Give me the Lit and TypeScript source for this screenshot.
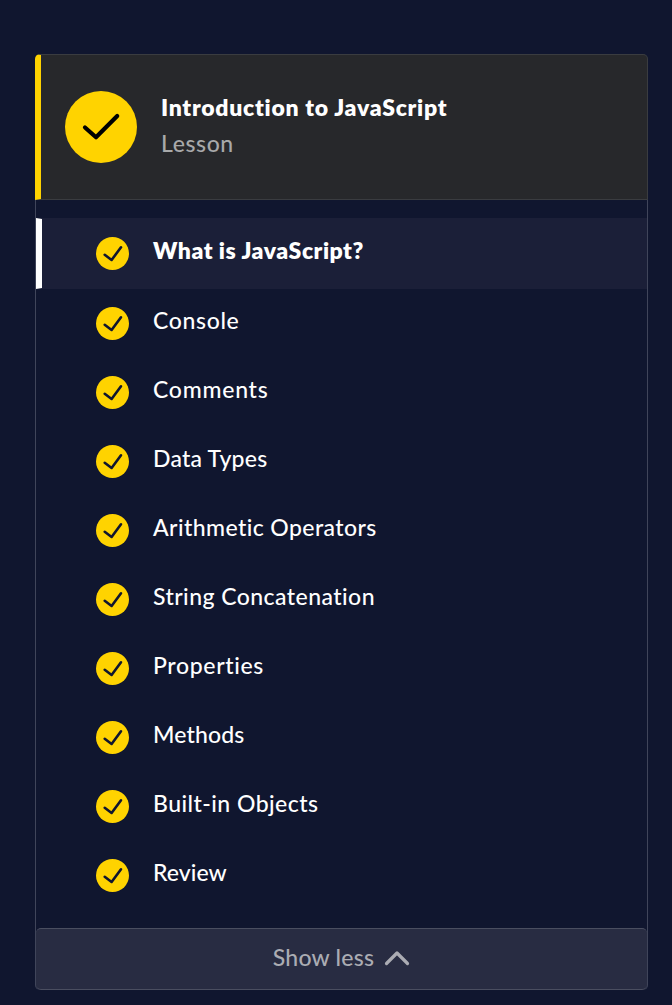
import { LitElement, html, css } from "lit";
import { customElement } from "lit/decorators.js";

interface Exercise { title: string; active?: boolean; tracking: number }

const exercises: Exercise[] = [
  { title: "What is JavaScript?", active: true, tracking: 0.52 },
  { title: "Console", tracking: 0.65 },
  { title: "Comments", tracking: 0.75 },
  { title: "Data Types", tracking: 0.22 },
  { title: "Arithmetic Operators", tracking: 0.42 },
  { title: "String Concatenation", tracking: 0.45 },
  { title: "Properties", tracking: 0.65 },
  { title: "Methods", tracking: 0.15 },
  { title: "Built-in Objects", tracking: 0.46 },
  { title: "Review", tracking: 0.05 },
];

@customElement("app-root")
export class AppRoot extends LitElement {
  static styles = css`
    :host { display: block; box-sizing: border-box; height: 1005px; padding: 54px 24px 15px 35px; background: #10162f; color: #fff; font: 500 23px/30px Lato, sans-serif; font-variant-ligatures: none; }
    * { box-sizing: border-box; }
    .card { display: flex; flex-direction: column; height: 936px; }
    .header { display: flex; align-items: center; height: 146px; padding-left: 24px; border: 1px solid #3a3c40; border-left: 6px solid #ffd300; border-radius: 5px 5px 0 0; background: #27282b; }
    .badge { width: 72px; height: 72px; flex: none; }
    .heading { margin-left: 24px; padding-bottom: 4px; }
    .title { font-weight: 800; line-height: 36px; letter-spacing: 0.72px; }
    .kind { line-height: 36px; color: #a8a9aa; letter-spacing: 0.6px; }
    .body { flex: 1; display: flex; flex-direction: column; border: solid #40455a; border-width: 0 1px; border-radius: 0 0 5px 5px; }
    .list { flex: 1; padding-top: 18px; }
    .row { display: flex; align-items: center; height: 69px; padding-left: 60px; }
    .row.active { height: 71px; padding-left: 54px; border: solid #1b1f38; border-width: 1px 0; border-left: 6px solid #fff; background: #1b1f38; font-weight: 800; }
    .dot { width: 33px; height: 33px; margin-right: 24px; flex: none; }
    .label { margin-bottom: 8px; }
    .footer { display: flex; align-items: center; justify-content: center; height: 62px; border: solid #4a4e60; border-width: 1px 0; border-radius: 5px; background: #282c42; color: #abacb3; }
    .more { margin-bottom: 4px; letter-spacing: 0.25px; }
    .chevron { margin: 0 0 2px 10px; width: 26px; height: 16px; }
  `;

  render() {
    return html`
      <section class="card">
        <header class="header">
          <svg class="badge" viewBox="0 0 72 72"><circle cx="36" cy="36" r="36" fill="#ffd300" /><path d="M20 36.5L31 46.3L52.2 25" fill="none" stroke="#000" stroke-width="4.2" stroke-linecap="round" stroke-linejoin="round" /></svg>
          <div class="heading"><div class="title">Introduction to JavaScript</div><div class="kind">Lesson</div></div>
        </header>
        <div class="body">
          <div class="list">
            ${exercises.map((e) => html`<div class="row ${e.active ? "active" : ""}">
              <svg class="dot" viewBox="0 0 33 33"><circle cx="16.5" cy="16.5" r="16.5" fill="#ffd300" /><path d="M8.7 17.8L15.6 23L25 10.3" fill="none" stroke="#10162f" stroke-width="2.6" stroke-linecap="round" stroke-linejoin="round" /></svg>
              <span class="label" style="letter-spacing:${e.tracking}px">${e.title}</span></div>`)}
          </div>
          <footer class="footer"><span class="more">Show less</span><svg class="chevron" viewBox="0 0 26 16"><path d="M2.5 13.5L13 3L23.5 13.5" fill="none" stroke="#abacb3" stroke-width="3.2" stroke-linecap="round" stroke-linejoin="round" /></svg></footer>
        </div>
      </section>`;
  }
}
